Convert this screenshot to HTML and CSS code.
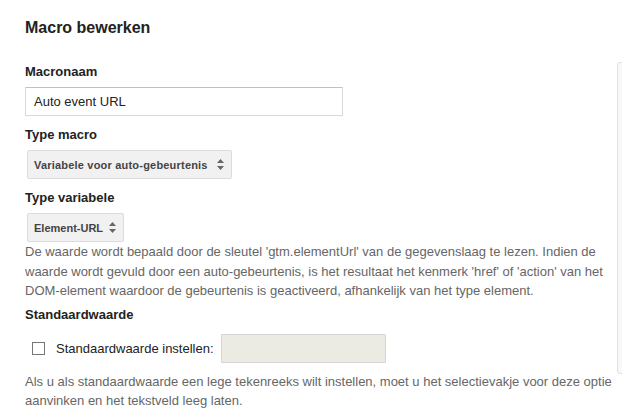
FILE: index.html
```html
<!DOCTYPE html>
<html lang="nl">
<head>
  <meta charset="UTF-8">
  <meta name="viewport" content="width=device-width, initial-scale=1.0">
  <title>Macro bewerken</title>
  <link rel="stylesheet" href="styles.css">
</head>
<body>
  <div class="editor">
    <h1 class="editor-title">Macro bewerken</h1>

    <div class="field field-first">
      <label class="field-label" for="macro-name">Macronaam</label>
      <input class="text-input" id="macro-name" type="text" value="Auto event URL">
    </div>

    <div class="field">
      <div class="field-label">Type macro</div>
      <div class="select-box select-wide">
        <span>Variabele voor auto-gebeurtenis</span>
        <svg class="select-arrows" width="7" height="11" viewBox="0 0 7 11">
          <polygon points="0,4 3.5,0 7,4" />
          <polygon points="0,7 3.5,11 7,7" />
        </svg>
      </div>
    </div>

    <div class="field">
      <div class="field-label">Type variabele</div>
      <div class="select-box">
        <span>Element-URL</span>
        <svg class="select-arrows" width="7" height="11" viewBox="0 0 7 11">
          <polygon points="0,4 3.5,0 7,4" />
          <polygon points="0,7 3.5,11 7,7" />
        </svg>
      </div>
      <p class="help-text">De waarde wordt bepaald door de sleutel 'gtm.elementUrl' van de gegevenslaag te lezen. Indien de waarde wordt gevuld door een auto-gebeurtenis, is het resultaat het kenmerk 'href' of 'action' van het DOM-element waardoor de gebeurtenis is geactiveerd, afhankelijk van het type element.</p>
    </div>

    <div class="field field-default">
      <div class="field-label">Standaardwaarde</div>
      <div class="default-row">
        <span class="checkbox"></span>
        <span class="default-label">Standaardwaarde instellen:</span>
        <input class="text-input text-input-disabled" type="text" disabled>
      </div>
      <p class="help-text help-text-spaced">Als u als standaardwaarde een lege tekenreeks wilt instellen, moet u het selectievakje voor deze optie aanvinken en het tekstveld leeg laten.</p>
    </div>
  </div>

  <!-- zijpaneel dat rechts net in beeld valt -->
  <div class="side-panel"></div>
</body>
</html>
```

FILE: styles.css
```css
body {
  margin: 0;
  padding: 0;
  background-color: #fff;
  color: #222;
  font-family: "Liberation Sans", Arial, sans-serif;
  font-size: 13px;
  overflow: hidden;
}

.editor {
  padding: 18px 0 0 25px;
}

.editor-title {
  margin: 0;
  font-size: 16px;
  line-height: 20px;
  font-weight: bold;
  color: #222;
}

.field {
  margin-top: 11px;
}

.field-first {
  margin-top: 26px;
}

.field-label {
  display: block;
  margin-bottom: 7px;
  font-size: 13px;
  line-height: 16px;
  font-weight: bold;
  color: #222;
}

.text-input {
  box-sizing: border-box;
  display: block;
  width: 318px;
  height: 29px;
  margin: 0;
  padding: 0 8px;
  border: 1px solid #d9d9d9;
  border-top-color: #c0c0c0;
  border-radius: 1px;
  font-family: inherit;
  font-size: 13px;
  color: #222;
  background: #fff;
  outline: none;
}

.select-box {
  box-sizing: border-box;
  display: inline-flex;
  align-items: center;
  justify-content: space-between;
  gap: 6px;
  height: 29px;
  margin-left: 2px;
  padding: 0 7px 0 6px;
  border: 1px solid #dcdcdc;
  border-radius: 2px;
  background-color: #f1f1f1;
  color: #444;
  font-size: 11px;
  font-weight: bold;
}

.select-wide {
  min-width: 205px;
  letter-spacing: 0.2px;
}

.select-arrows {
  display: block;
  fill: #666;
}

.help-text {
  margin: 0;
  font-size: 13px;
  line-height: 19.5px;
  color: #666;
}

.help-text-spaced {
  margin-top: 9px;
}

.field-default {
  margin-top: 6px;
}

.field-default .field-label {
  margin-bottom: 11px;
}

.default-row {
  display: flex;
  align-items: center;
  padding-left: 7px;
}

.checkbox {
  box-sizing: border-box;
  width: 13px;
  height: 13px;
  margin-top: 1px;
  border: 1px solid #777;
  background: #fff;
}

.default-label {
  margin-left: 11px;
  margin-right: 7px;
  color: #222;
}

.text-input-disabled {
  width: 165px;
  border-color: #d5d5d5;
  background-color: #ebebe4;
}

.side-panel {
  position: absolute;
  top: 62px;
  left: 617px;
  width: 12px;
  height: 310px;
  border: 1px solid #e0e0e0;
  border-radius: 3px;
  background-color: #f8f8f8;
}
```
